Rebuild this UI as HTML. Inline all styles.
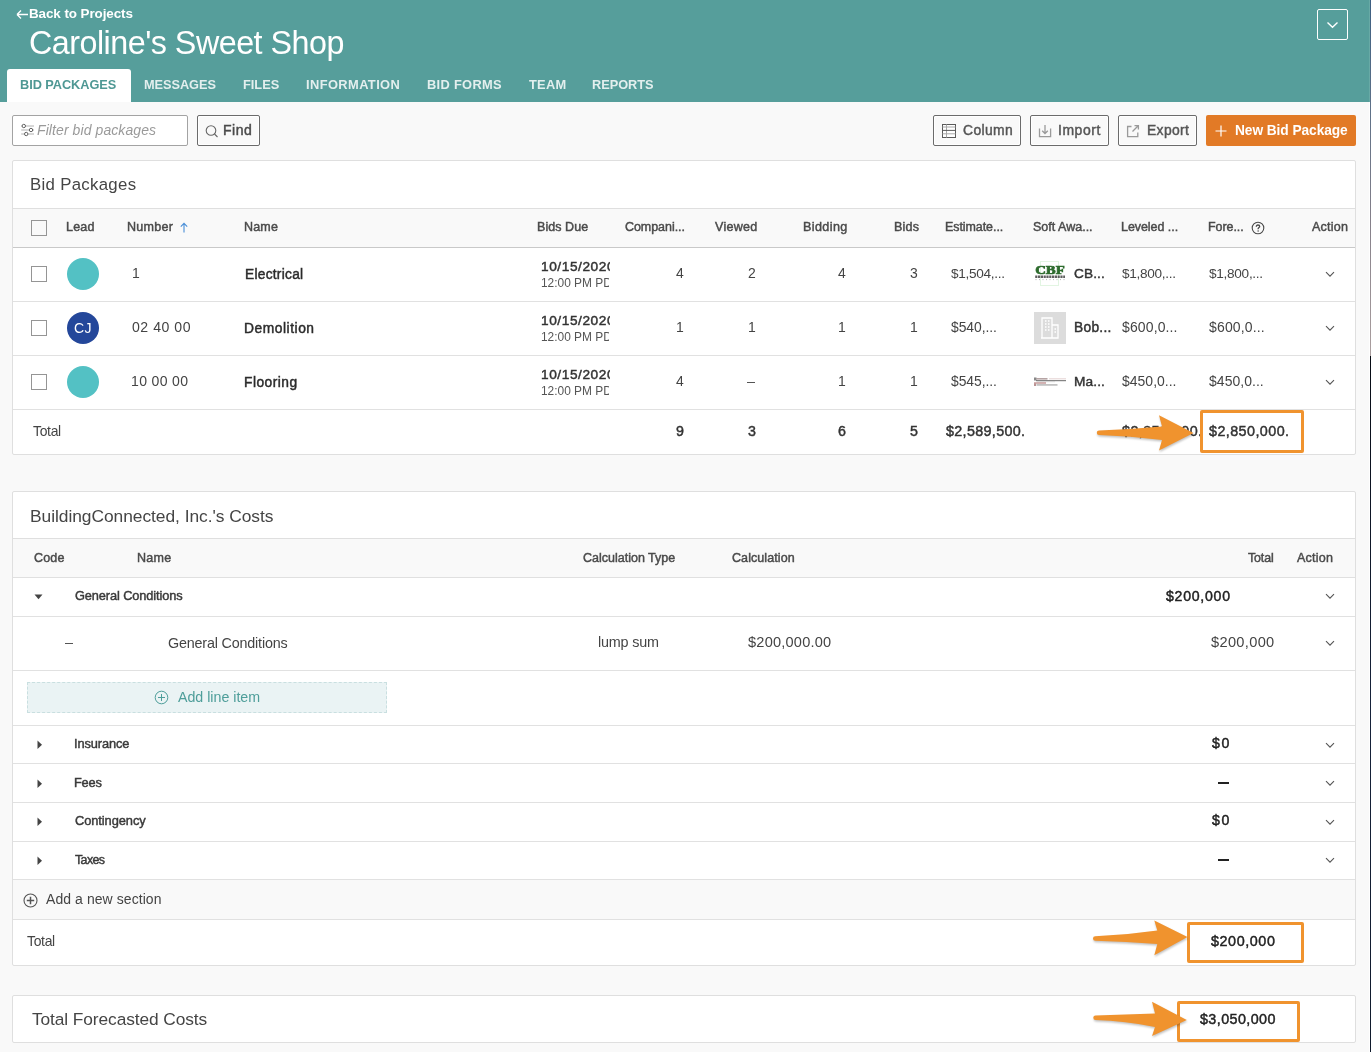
<!DOCTYPE html>
<html><head><meta charset="utf-8"><style>
html,body{margin:0;padding:0;}
body{width:1371px;height:1052px;position:relative;overflow:hidden;background:#f9f9f9;font-family:"Liberation Sans",sans-serif;}
.t{position:absolute;white-space:nowrap;will-change:transform;}
.r{position:absolute;}
</style></head><body>
<div class="r" style="left:0px;top:0px;width:1371px;height:102px;background:#569e9b;"></div>
<div class="r" style="left:7px;top:69px;width:124px;height:33px;background:#fff;border-radius:3px 3px 0 0;"></div>
<svg class="r" style="left:15px;top:7px" width="14" height="14" viewBox="0 0 14 14"><path d="M2 7.5H13M2 7.5L6 3.5M2 7.5L6 11.5" stroke="#fff" stroke-width="1.3" fill="none"/></svg>
<div class="t" style="left:28.60px;top:6.00px;font-size:13.43px;line-height:15px;font-weight:bold;font-style:normal;color:#fff;letter-spacing:-0.085px;">Back to Projects</div>
<div class="t" style="left:28.96px;top:25.00px;font-size:32.29px;line-height:36px;font-weight:normal;font-style:normal;color:#fff;letter-spacing:-0.511px;">Caroline's Sweet Shop</div>
<div class="r" style="left:1317px;top:9px;width:31px;height:31px;border:1.3px solid #fff;border-radius:2px;box-sizing:border-box;"></div>
<svg class="r" style="left:1326px;top:21px" width="13" height="8" viewBox="0 0 13 8"><path d="M1.5 1.5L6.5 6.2L11.5 1.5" stroke="#fff" stroke-width="1.4" fill="none"/></svg>
<div class="t" style="left:20.05px;top:77.00px;font-size:12.75px;line-height:15px;font-weight:bold;font-style:normal;color:#4f9894;letter-spacing:-0.054px;">BID PACKAGES</div>
<div class="t" style="left:144.05px;top:77.00px;font-size:12.76px;line-height:15px;font-weight:bold;font-style:normal;color:#e3efee;letter-spacing:-0.050px;">MESSAGES</div>
<div class="t" style="left:242.64px;top:77.00px;font-size:12.79px;line-height:15px;font-weight:bold;font-style:normal;color:#e3efee;letter-spacing:0.003px;">FILES</div>
<div class="t" style="left:305.64px;top:77.00px;font-size:12.87px;line-height:15px;font-weight:bold;font-style:normal;color:#e3efee;letter-spacing:0.404px;">INFORMATION</div>
<div class="t" style="left:426.84px;top:77.00px;font-size:12.85px;line-height:15px;font-weight:bold;font-style:normal;color:#e3efee;letter-spacing:0.318px;">BID FORMS</div>
<div class="t" style="left:528.96px;top:77.00px;font-size:12.83px;line-height:15px;font-weight:bold;font-style:normal;color:#e3efee;letter-spacing:0.253px;">TEAM</div>
<div class="t" style="left:592.45px;top:77.00px;font-size:12.77px;line-height:15px;font-weight:bold;font-style:normal;color:#e3efee;letter-spacing:-0.030px;">REPORTS</div>
<div class="r" style="left:0px;top:102px;width:1371px;height:950px;background:#f9f9f9;"></div>
<div class="r" style="left:12px;top:115px;width:176px;height:31px;background:#fff;border:1px solid #a3a3a3;box-sizing:border-box;border-radius:2px;"></div>
<svg class="r" style="left:20px;top:122px" width="16" height="16" viewBox="0 0 16 16" fill="none"><path d="M1.2 4H14M1.2 8H14M1.2 12H14" stroke="#b0b0b0" stroke-width="1"/><circle cx="3.8" cy="4" r="1.7" fill="#fff" stroke="#555" stroke-width="0.9"/><circle cx="11" cy="8" r="1.7" fill="#fff" stroke="#555" stroke-width="0.9"/><circle cx="6.2" cy="12" r="1.7" fill="#fff" stroke="#555" stroke-width="0.9"/></svg>
<div class="t" style="left:37.37px;top:122.00px;font-size:13.98px;line-height:16px;font-weight:normal;font-style:italic;color:#9a9a9a;letter-spacing:0.098px;">Filter bid packages</div>
<div class="r" style="left:197px;top:115px;width:63px;height:31px;background:#f9f9f9;border:1px solid #6b6b6b;box-shadow:inset 0 0 0 1px #fff;box-sizing:border-box;border-radius:2px;"></div>
<svg class="r" style="left:205px;top:124px" width="14" height="14" viewBox="0 0 14 14" fill="none" stroke="#666" stroke-width="1.1"><circle cx="6" cy="6.5" r="4.8"/><path d="M9.5 10L12.5 13"/></svg>
<div class="t" style="left:222.85px;top:122.00px;font-size:14.06px;line-height:16px;font-weight:normal;font-style:normal;color:#4a4a4a;letter-spacing:0.501px;-webkit-text-stroke:0.45px #4a4a4a;">Find</div>
<div class="r" style="left:933px;top:115px;width:88px;height:31px;background:#f9f9f9;border:1px solid #6b6b6b;box-shadow:inset 0 0 0 1px #fff;box-sizing:border-box;border-radius:2px;"></div>
<div class="t" style="left:962.99px;top:122.00px;font-size:13.88px;line-height:16px;font-weight:normal;font-style:normal;color:#555;letter-spacing:0.374px;-webkit-text-stroke:0.45px #555;">Column</div>
<div class="r" style="left:1030px;top:115px;width:79px;height:31px;background:#f9f9f9;border:1px solid #6b6b6b;box-shadow:inset 0 0 0 1px #fff;box-sizing:border-box;border-radius:2px;"></div>
<div class="t" style="left:1057.91px;top:122.00px;font-size:13.94px;line-height:16px;font-weight:normal;font-style:normal;color:#555;letter-spacing:0.556px;-webkit-text-stroke:0.45px #555;">Import</div>
<div class="r" style="left:1118px;top:115px;width:79px;height:31px;background:#f9f9f9;border:1px solid #6b6b6b;box-shadow:inset 0 0 0 1px #fff;box-sizing:border-box;border-radius:2px;"></div>
<div class="t" style="left:1146.56px;top:122.00px;font-size:13.89px;line-height:16px;font-weight:normal;font-style:normal;color:#555;letter-spacing:0.358px;-webkit-text-stroke:0.45px #555;">Export</div>
<svg class="r" style="left:942px;top:124px" width="14" height="14" viewBox="0 0 14 14" fill="#fff"><rect x="0.5" y="0.5" width="13" height="13" stroke="#5a5a5a" stroke-width="1"/><path d="M4.5 0.5V13.5M0.5 3H13.5M0.5 9.8H13.5" stroke="#a8a8a8" stroke-width="1" fill="none"/><path d="M0.5 6.4H13.5" stroke="#5a5a5a" stroke-width="1" fill="none"/></svg>
<svg class="r" style="left:1038px;top:124px" width="14" height="14" viewBox="0 0 14 14" fill="none" stroke="#9a9a9a" stroke-width="1.3"><path d="M1.5 4.5V12.6H12.6V4.5"/><path d="M7 1V9.5M4.2 6.7L7 9.5L9.8 6.7"/></svg>
<svg class="r" style="left:1126px;top:124px" width="14" height="14" viewBox="0 0 14 14" fill="none" stroke="#9a9a9a" stroke-width="1.3"><path d="M5.5 2.5H1.6V12.6H11.8V8.5"/><path d="M6.5 7.5L12.2 1.8M8.5 1.6H12.4V5.5"/></svg>
<div class="r" style="left:1206px;top:115px;width:150px;height:31px;background:#e27a26;border-radius:2px;"></div>
<svg class="r" style="left:1215px;top:125px" width="12" height="12" viewBox="0 0 12 12" stroke="#fff" stroke-width="1.2"><path d="M6 0.5V11.5M0.5 6H11.5"/></svg>
<div class="t" style="left:1234.68px;top:123.00px;font-size:13.74px;line-height:15px;font-weight:bold;font-style:normal;color:#fff;letter-spacing:-0.072px;">New Bid Package</div>
<div class="r" style="left:12px;top:160px;width:1344px;height:295px;background:#fff;border:1px solid #dfdfdf;box-sizing:border-box;border-radius:2px;"></div>
<div class="t" style="left:30.32px;top:175.00px;font-size:16.79px;line-height:19px;font-weight:normal;font-style:normal;color:#454545;letter-spacing:0.310px;">Bid Packages</div>
<div class="r" style="left:13px;top:208px;width:1342px;height:1px;background:#dfdfdf;"></div>
<div class="r" style="left:13px;top:209px;width:1342px;height:38px;background:#f9f9f9;"></div>
<div class="r" style="left:13px;top:247px;width:1342px;height:1px;background:#c9c9c9;"></div>
<div class="r" style="left:13px;top:301px;width:1342px;height:1px;background:#e1e1e1;"></div>
<div class="r" style="left:13px;top:355px;width:1342px;height:1px;background:#e1e1e1;"></div>
<div class="r" style="left:13px;top:409px;width:1342px;height:1px;background:#e1e1e1;"></div>
<div class="r" style="left:31px;top:220px;width:16px;height:16px;border:1px solid #959595;box-sizing:border-box;"></div>
<div class="t" style="left:66.37px;top:220.00px;font-size:12.54px;line-height:14px;font-weight:normal;font-style:normal;color:#4a4a4a;letter-spacing:0.183px;-webkit-text-stroke:0.45px #4a4a4a;">Lead</div>
<div class="t" style="left:126.97px;top:220.00px;font-size:12.55px;line-height:14px;font-weight:normal;font-style:normal;color:#4a4a4a;letter-spacing:0.242px;-webkit-text-stroke:0.45px #4a4a4a;">Number</div>
<div class="t" style="left:243.97px;top:220.00px;font-size:12.53px;line-height:14px;font-weight:normal;font-style:normal;color:#4a4a4a;letter-spacing:0.187px;-webkit-text-stroke:0.45px #4a4a4a;">Name</div>
<div class="t" style="left:536.77px;top:220.00px;font-size:12.51px;line-height:14px;font-weight:normal;font-style:normal;color:#4a4a4a;letter-spacing:0.058px;-webkit-text-stroke:0.45px #4a4a4a;">Bids Due</div>
<div class="t" style="left:624.57px;top:220.00px;font-size:12.47px;line-height:14px;font-weight:normal;font-style:normal;color:#4a4a4a;letter-spacing:-0.034px;-webkit-text-stroke:0.45px #4a4a4a;">Compani...</div>
<div class="t" style="left:715.44px;top:220.00px;font-size:12.55px;line-height:14px;font-weight:normal;font-style:normal;color:#4a4a4a;letter-spacing:0.240px;-webkit-text-stroke:0.45px #4a4a4a;">Viewed</div>
<div class="t" style="left:803.47px;top:220.00px;font-size:12.60px;line-height:14px;font-weight:normal;font-style:normal;color:#4a4a4a;letter-spacing:0.387px;-webkit-text-stroke:0.45px #4a4a4a;">Bidding</div>
<div class="t" style="left:894.37px;top:220.00px;font-size:12.54px;line-height:14px;font-weight:normal;font-style:normal;color:#4a4a4a;letter-spacing:0.194px;-webkit-text-stroke:0.45px #4a4a4a;">Bids</div>
<div class="t" style="left:945.48px;top:220.00px;font-size:12.44px;line-height:14px;font-weight:normal;font-style:normal;color:#4a4a4a;letter-spacing:-0.051px;-webkit-text-stroke:0.45px #4a4a4a;">Estimate...</div>
<div class="t" style="left:1033.03px;top:220.00px;font-size:12.50px;line-height:14px;font-weight:normal;font-style:normal;color:#4a4a4a;letter-spacing:0.006px;-webkit-text-stroke:0.45px #4a4a4a;">Soft Awa...</div>
<div class="t" style="left:1120.68px;top:220.00px;font-size:12.46px;line-height:14px;font-weight:normal;font-style:normal;color:#4a4a4a;letter-spacing:-0.033px;-webkit-text-stroke:0.45px #4a4a4a;">Leveled ...</div>
<div class="t" style="left:1207.98px;top:220.00px;font-size:12.44px;line-height:14px;font-weight:normal;font-style:normal;color:#4a4a4a;letter-spacing:-0.049px;-webkit-text-stroke:0.45px #4a4a4a;">Fore...</div>
<div class="t" style="left:1312.18px;top:220.00px;font-size:12.56px;line-height:14px;font-weight:normal;font-style:normal;color:#4a4a4a;letter-spacing:0.228px;-webkit-text-stroke:0.45px #4a4a4a;">Action</div>
<svg class="r" style="left:179px;top:222px" width="10" height="11" viewBox="0 0 10 11" fill="none" stroke="#4a8fd8" stroke-width="1.1"><path d="M5 10.5V1.5M1.8 4.6L5 1.3L8.2 4.6"/></svg>
<svg class="r" style="left:1251px;top:221px" width="14" height="14" viewBox="0 0 14 14" fill="none" stroke="#4a4a4a" stroke-width="1.1"><circle cx="7" cy="7" r="5.8"/><path d="M5.3 5.7C5.3 4.6 6 4 7 4C8 4 8.7 4.6 8.7 5.5C8.7 6.5 7.1 6.7 7.1 7.9V8.2" stroke-width="1.3"/><circle cx="7.1" cy="9.9" r="0.75" fill="#4a4a4a" stroke="none"/></svg>
<div class="r" style="left:31px;top:266px;width:16px;height:16px;border:1px solid #959595;box-sizing:border-box;"></div>
<div class="r" style="left:67px;top:258px;width:32px;height:32px;background:#53c1c4;border-radius:50%;"></div>
<div class="t" style="left:131.74px;top:265.00px;font-size:13.95px;line-height:16px;font-weight:normal;font-style:normal;color:#444;letter-spacing:0.000px;">1</div>
<div class="t" style="left:244.57px;top:267.00px;font-size:13.74px;line-height:15px;font-weight:normal;font-style:normal;color:#2b2b2b;letter-spacing:0.266px;-webkit-text-stroke:0.45px #2b2b2b;">Electrical</div>
<div class="t" style="left:540.96px;top:259.00px;font-size:13.66px;line-height:15px;font-weight:normal;font-style:normal;color:#333;letter-spacing:0.580px;width:68.54px;overflow:hidden;-webkit-text-stroke:0.45px #333;">10/15/2020</div>
<div class="t" style="left:541.09px;top:276.00px;font-size:11.92px;line-height:14px;font-weight:normal;font-style:normal;color:#555;letter-spacing:0.000px;width:68.41px;overflow:hidden;">12:00 PM PDT</div>
<div class="t" style="left:675.85px;top:265.00px;font-size:13.95px;line-height:16px;font-weight:normal;font-style:normal;color:#444;letter-spacing:0.000px;">4</div>
<div class="t" style="left:747.54px;top:265.00px;font-size:13.95px;line-height:16px;font-weight:normal;font-style:normal;color:#444;letter-spacing:0.000px;">2</div>
<div class="t" style="left:837.65px;top:265.00px;font-size:13.95px;line-height:16px;font-weight:normal;font-style:normal;color:#444;letter-spacing:0.000px;">4</div>
<div class="t" style="left:909.65px;top:265.00px;font-size:13.95px;line-height:16px;font-weight:normal;font-style:normal;color:#444;letter-spacing:0.000px;">3</div>
<div class="t" style="left:950.85px;top:266.00px;font-size:13.59px;line-height:15px;font-weight:normal;font-style:normal;color:#444;letter-spacing:-0.297px;">$1,504,...</div>
<div class="t" style="left:1074.31px;top:266.00px;font-size:13.68px;line-height:15px;font-weight:normal;font-style:normal;color:#333;letter-spacing:0.082px;-webkit-text-stroke:0.45px #333;">CB...</div>
<div class="t" style="left:1121.55px;top:266.00px;font-size:13.59px;line-height:15px;font-weight:normal;font-style:normal;color:#444;letter-spacing:-0.297px;">$1,800,...</div>
<div class="t" style="left:1208.85px;top:266.00px;font-size:13.60px;line-height:15px;font-weight:normal;font-style:normal;color:#444;letter-spacing:-0.283px;">$1,800,...</div>
<svg class="r" style="left:1324.5px;top:271.0px" width="10" height="7" viewBox="0 0 10 7" fill="none" stroke="#555" stroke-width="1.1"><path d="M1 1.2L5 5.2L9 1.2"/></svg>
<div class="r" style="left:31px;top:320px;width:16px;height:16px;border:1px solid #959595;box-sizing:border-box;"></div>
<div class="r" style="left:67px;top:312px;width:32px;height:32px;background:#24479a;border-radius:50%;"></div>
<div class="t" style="left:74.49px;top:320.00px;font-size:14.01px;line-height:16px;font-weight:normal;font-style:normal;color:#fff;letter-spacing:0.432px;">CJ</div>
<div class="t" style="left:132.45px;top:319.00px;font-size:14.08px;line-height:16px;font-weight:normal;font-style:normal;color:#444;letter-spacing:0.527px;">02 40 00</div>
<div class="t" style="left:244.37px;top:321.00px;font-size:13.80px;line-height:15px;font-weight:normal;font-style:normal;color:#2b2b2b;letter-spacing:0.537px;-webkit-text-stroke:0.45px #2b2b2b;">Demolition</div>
<div class="t" style="left:540.96px;top:313.00px;font-size:13.66px;line-height:15px;font-weight:normal;font-style:normal;color:#333;letter-spacing:0.580px;width:68.54px;overflow:hidden;-webkit-text-stroke:0.45px #333;">10/15/2020</div>
<div class="t" style="left:541.09px;top:330.00px;font-size:11.92px;line-height:14px;font-weight:normal;font-style:normal;color:#555;letter-spacing:0.000px;width:68.41px;overflow:hidden;">12:00 PM PDT</div>
<div class="t" style="left:676.12px;top:319.00px;font-size:13.95px;line-height:16px;font-weight:normal;font-style:normal;color:#444;letter-spacing:0.000px;">1</div>
<div class="t" style="left:747.52px;top:319.00px;font-size:13.95px;line-height:16px;font-weight:normal;font-style:normal;color:#444;letter-spacing:0.000px;">1</div>
<div class="t" style="left:837.92px;top:319.00px;font-size:13.95px;line-height:16px;font-weight:normal;font-style:normal;color:#444;letter-spacing:0.000px;">1</div>
<div class="t" style="left:909.72px;top:319.00px;font-size:13.95px;line-height:16px;font-weight:normal;font-style:normal;color:#444;letter-spacing:0.000px;">1</div>
<div class="t" style="left:950.85px;top:319.00px;font-size:13.89px;line-height:16px;font-weight:normal;font-style:normal;color:#444;letter-spacing:-0.058px;">$540,...</div>
<div class="t" style="left:1074.37px;top:320.00px;font-size:13.74px;line-height:15px;font-weight:normal;font-style:normal;color:#333;letter-spacing:0.295px;-webkit-text-stroke:0.45px #333;">Bob...</div>
<div class="t" style="left:1121.55px;top:319.00px;font-size:13.99px;line-height:16px;font-weight:normal;font-style:normal;color:#444;letter-spacing:0.134px;">$600,0...</div>
<div class="t" style="left:1208.85px;top:319.00px;font-size:14.00px;line-height:16px;font-weight:normal;font-style:normal;color:#444;letter-spacing:0.156px;">$600,0...</div>
<svg class="r" style="left:1324.5px;top:325.0px" width="10" height="7" viewBox="0 0 10 7" fill="none" stroke="#555" stroke-width="1.1"><path d="M1 1.2L5 5.2L9 1.2"/></svg>
<div class="r" style="left:31px;top:374px;width:16px;height:16px;border:1px solid #959595;box-sizing:border-box;"></div>
<div class="r" style="left:67px;top:366px;width:32px;height:32px;background:#53c1c4;border-radius:50%;"></div>
<div class="t" style="left:130.93px;top:373.00px;font-size:14.04px;line-height:16px;font-weight:normal;font-style:normal;color:#444;letter-spacing:0.339px;">10 00 00</div>
<div class="t" style="left:244.37px;top:375.00px;font-size:13.79px;line-height:15px;font-weight:normal;font-style:normal;color:#2b2b2b;letter-spacing:0.472px;-webkit-text-stroke:0.45px #2b2b2b;">Flooring</div>
<div class="t" style="left:540.96px;top:367.00px;font-size:13.66px;line-height:15px;font-weight:normal;font-style:normal;color:#333;letter-spacing:0.580px;width:68.54px;overflow:hidden;-webkit-text-stroke:0.45px #333;">10/15/2020</div>
<div class="t" style="left:541.09px;top:384.00px;font-size:11.92px;line-height:14px;font-weight:normal;font-style:normal;color:#555;letter-spacing:0.000px;width:68.41px;overflow:hidden;">12:00 PM PDT</div>
<div class="t" style="left:675.85px;top:373.00px;font-size:13.95px;line-height:16px;font-weight:normal;font-style:normal;color:#444;letter-spacing:0.000px;">4</div>
<div class="r" style="left:747px;top:382px;width:8px;height:1px;background:#555;"></div>
<div class="t" style="left:837.92px;top:373.00px;font-size:13.95px;line-height:16px;font-weight:normal;font-style:normal;color:#444;letter-spacing:0.000px;">1</div>
<div class="t" style="left:909.72px;top:373.00px;font-size:13.95px;line-height:16px;font-weight:normal;font-style:normal;color:#444;letter-spacing:0.000px;">1</div>
<div class="t" style="left:950.85px;top:373.00px;font-size:13.89px;line-height:16px;font-weight:normal;font-style:normal;color:#444;letter-spacing:-0.058px;">$545,...</div>
<div class="t" style="left:1074.38px;top:374.00px;font-size:13.69px;line-height:15px;font-weight:normal;font-style:normal;color:#333;letter-spacing:0.110px;-webkit-text-stroke:0.45px #333;">Ma...</div>
<div class="t" style="left:1121.55px;top:373.00px;font-size:13.96px;line-height:16px;font-weight:normal;font-style:normal;color:#444;letter-spacing:0.024px;">$450,0...</div>
<div class="t" style="left:1208.85px;top:373.00px;font-size:13.97px;line-height:16px;font-weight:normal;font-style:normal;color:#444;letter-spacing:0.046px;">$450,0...</div>
<svg class="r" style="left:1324.5px;top:379.0px" width="10" height="7" viewBox="0 0 10 7" fill="none" stroke="#555" stroke-width="1.1"><path d="M1 1.2L5 5.2L9 1.2"/></svg>
<div class="r" style="left:1040px;top:261px;width:19px;height:25px;border:1px solid #e2f5e2;box-sizing:border-box;"></div>
<svg class="r" style="left:1034px;top:262px;will-change:transform" width="32" height="20" viewBox="0 0 32 20"><text x="1.2" y="12" textLength="29.5" lengthAdjust="spacingAndGlyphs" font-family="Liberation Serif" font-weight="bold" font-size="11.8" fill="#2d6b2d" stroke="#2d6b2d" stroke-width="0.7">CBF</text><path d="M1.2 14.8H31" stroke="#444" stroke-width="2.4" stroke-dasharray="2.2 0.6" opacity="0.85"/><path d="M1.5 17.6H31" stroke="#888" stroke-width="1" stroke-dasharray="1 2.5" opacity="0.6"/></svg>
<div class="r" style="left:1034px;top:312px;width:32px;height:32px;background:#dcdcdc;"></div>
<svg class="r" style="left:1034px;top:312px" width="32" height="32" viewBox="0 0 32 32" fill="none" stroke="#fff" stroke-width="1.3"><path d="M8 26V6H18V26M18 13H24V26H7"/><path d="M11 9h1.5M14 9h1.5M11 12h1.5M14 12h1.5M11 15h1.5M14 15h1.5M11 18h1.5M14 18h1.5M20.5 17h1.5M20.5 20h1.5" stroke-width="1.5"/></svg>
<svg class="r" style="left:1034px;top:376px" width="32" height="12" viewBox="0 0 32 12"><rect x="0" y="1.5" width="2.5" height="3" fill="#555" opacity="0.7"/><rect x="2.5" y="2" width="11" height="1.6" fill="#7a5a5a" opacity="0.55"/><rect x="15" y="2.3" width="17" height="1" fill="#c09a9a" opacity="0.45"/><rect x="2" y="4.1" width="30" height="1.1" fill="#555" opacity="0.8"/><rect x="3" y="5.4" width="18" height="0.8" fill="#bbb" opacity="0.5"/><rect x="0" y="6.4" width="12" height="1.2" fill="#9b5050" opacity="0.7"/><rect x="0" y="7.6" width="2" height="2.4" fill="#8b4a4a" opacity="0.6"/><rect x="2.5" y="8" width="21" height="1.8" fill="#777" opacity="0.45"/></svg>
<div class="t" style="left:32.99px;top:423.00px;font-size:13.93px;line-height:16px;font-weight:normal;font-style:normal;color:#444;letter-spacing:-0.304px;">Total</div>
<div class="t" style="left:675.75px;top:423.00px;font-size:14.24px;line-height:16px;font-weight:normal;font-style:normal;color:#333;letter-spacing:0.000px;-webkit-text-stroke:0.45px #333;">9</div>
<div class="t" style="left:748.30px;top:423.00px;font-size:14.24px;line-height:16px;font-weight:normal;font-style:normal;color:#333;letter-spacing:0.000px;-webkit-text-stroke:0.45px #333;">3</div>
<div class="t" style="left:837.60px;top:423.00px;font-size:14.24px;line-height:16px;font-weight:normal;font-style:normal;color:#333;letter-spacing:0.000px;-webkit-text-stroke:0.45px #333;">6</div>
<div class="t" style="left:909.88px;top:423.00px;font-size:14.24px;line-height:16px;font-weight:normal;font-style:normal;color:#333;letter-spacing:0.000px;-webkit-text-stroke:0.45px #333;">5</div>
<div class="t" style="left:946.15px;top:423.00px;font-size:14.33px;line-height:16px;font-weight:normal;font-style:normal;color:#333;letter-spacing:0.336px;-webkit-text-stroke:0.45px #333;">$2,589,500.</div>
<div class="t" style="left:1121.55px;top:423.00px;font-size:14.35px;line-height:16px;font-weight:normal;font-style:normal;color:#333;letter-spacing:0.424px;width:78.95px;overflow:hidden;-webkit-text-stroke:0.45px #333;">$2,850,000.</div>
<div class="t" style="left:1208.55px;top:423.00px;font-size:14.35px;line-height:16px;font-weight:normal;font-style:normal;color:#333;letter-spacing:0.424px;-webkit-text-stroke:0.45px #333;">$2,850,000.</div>
<div class="r" style="left:12px;top:491px;width:1344px;height:475px;background:#fff;border:1px solid #dfdfdf;box-sizing:border-box;border-radius:2px;"></div>
<div class="t" style="left:30.07px;top:506.00px;font-size:17.39px;line-height:20px;font-weight:normal;font-style:normal;color:#454545;letter-spacing:-0.047px;">BuildingConnected, Inc.'s Costs</div>
<div class="r" style="left:13px;top:538px;width:1342px;height:1px;background:#dfdfdf;"></div>
<div class="r" style="left:13px;top:539px;width:1342px;height:38px;background:#f9f9f9;"></div>
<div class="r" style="left:13px;top:577px;width:1342px;height:1px;background:#e0e0e0;"></div>
<div class="r" style="left:13px;top:616px;width:1342px;height:1px;background:#e1e1e1;"></div>
<div class="r" style="left:13px;top:670px;width:1342px;height:1px;background:#e1e1e1;"></div>
<div class="r" style="left:13px;top:725px;width:1342px;height:1px;background:#e1e1e1;"></div>
<div class="r" style="left:13px;top:763px;width:1342px;height:1px;background:#e1e1e1;"></div>
<div class="r" style="left:13px;top:802px;width:1342px;height:1px;background:#e1e1e1;"></div>
<div class="r" style="left:13px;top:841px;width:1342px;height:1px;background:#e1e1e1;"></div>
<div class="r" style="left:13px;top:879px;width:1342px;height:1px;background:#e1e1e1;"></div>
<div class="r" style="left:13px;top:919px;width:1342px;height:1px;background:#e1e1e1;"></div>
<div class="r" style="left:13px;top:880px;width:1342px;height:39px;background:#f9f9f9;"></div>
<div class="t" style="left:34.36px;top:551.00px;font-size:12.53px;line-height:14px;font-weight:normal;font-style:normal;color:#4a4a4a;letter-spacing:0.149px;-webkit-text-stroke:0.45px #4a4a4a;">Code</div>
<div class="t" style="left:137.37px;top:551.00px;font-size:12.54px;line-height:14px;font-weight:normal;font-style:normal;color:#4a4a4a;letter-spacing:0.275px;-webkit-text-stroke:0.45px #4a4a4a;">Name</div>
<div class="t" style="left:583.47px;top:551.00px;font-size:12.50px;line-height:14px;font-weight:normal;font-style:normal;color:#4a4a4a;letter-spacing:-0.001px;-webkit-text-stroke:0.45px #4a4a4a;">Calculation Type</div>
<div class="t" style="left:732.26px;top:551.00px;font-size:12.52px;line-height:14px;font-weight:normal;font-style:normal;color:#4a4a4a;letter-spacing:0.071px;-webkit-text-stroke:0.45px #4a4a4a;">Calculation</div>
<div class="t" style="left:1248.02px;top:551.00px;font-size:12.39px;line-height:14px;font-weight:normal;font-style:normal;color:#4a4a4a;letter-spacing:-0.109px;-webkit-text-stroke:0.45px #4a4a4a;">Total</div>
<div class="t" style="left:1297.38px;top:551.00px;font-size:12.55px;line-height:14px;font-weight:normal;font-style:normal;color:#4a4a4a;letter-spacing:0.211px;-webkit-text-stroke:0.45px #4a4a4a;">Action</div>
<svg class="r" style="left:34px;top:594px" width="9" height="6" viewBox="0 0 9 6"><path d="M0.5 0.5H8.5L4.5 5.2Z" fill="#444"/></svg>
<div class="t" style="left:74.76px;top:588.00px;font-size:12.81px;line-height:15px;font-weight:normal;font-style:normal;color:#3a3a3a;letter-spacing:-0.115px;-webkit-text-stroke:0.45px #3a3a3a;">General Conditions</div>
<div class="t" style="left:1165.55px;top:588.00px;font-size:14.12px;line-height:16px;font-weight:normal;font-style:normal;color:#222;letter-spacing:0.733px;-webkit-text-stroke:0.45px #222;">$200,000</div>
<svg class="r" style="left:1325px;top:593.2px" width="10" height="7" viewBox="0 0 10 7" fill="none" stroke="#555" stroke-width="1.1"><path d="M1 1.2L5 5.2L9 1.2"/></svg>
<div class="r" style="left:65px;top:643px;width:8px;height:1px;background:#555;"></div>
<div class="t" style="left:167.78px;top:635.00px;font-size:14.34px;line-height:16px;font-weight:normal;font-style:normal;color:#444;letter-spacing:-0.177px;">General Conditions</div>
<div class="t" style="left:598.43px;top:634.00px;font-size:14.37px;line-height:16px;font-weight:normal;font-style:normal;color:#444;letter-spacing:-0.181px;">lump sum</div>
<div class="t" style="left:747.54px;top:634.00px;font-size:14.59px;line-height:16px;font-weight:normal;font-style:normal;color:#444;letter-spacing:0.211px;">$200,000.00</div>
<div class="t" style="left:1211.34px;top:634.00px;font-size:14.61px;line-height:16px;font-weight:normal;font-style:normal;color:#444;letter-spacing:0.328px;">$200,000</div>
<svg class="r" style="left:1325px;top:640.0px" width="10" height="7" viewBox="0 0 10 7" fill="none" stroke="#555" stroke-width="1.1"><path d="M1 1.2L5 5.2L9 1.2"/></svg>
<div class="r" style="left:27px;top:682px;width:360px;height:31px;background:#eaf3f4;border:1px dashed #c9dfe0;box-sizing:border-box;"></div>
<svg class="r" style="left:154px;top:690px" width="15" height="15" viewBox="0 0 15 15" fill="none" stroke="#4e9e9a" stroke-width="1"><circle cx="7.5" cy="7.5" r="6.3"/><path d="M7.5 4V11M4 7.5H11"/></svg>
<div class="t" style="left:177.87px;top:689.00px;font-size:14.23px;line-height:16px;font-weight:normal;font-style:normal;color:#4e9e9a;letter-spacing:-0.010px;">Add line item</div>
<svg class="r" style="left:37px;top:740px" width="6" height="10" viewBox="0 0 6 10"><path d="M0.5 0.5V9L5 4.75Z" fill="#444"/></svg>
<div class="t" style="left:74.32px;top:736.00px;font-size:12.82px;line-height:15px;font-weight:normal;font-style:normal;color:#3a3a3a;letter-spacing:-0.109px;-webkit-text-stroke:0.45px #3a3a3a;">Insurance</div>
<div class="t" style="left:1212.25px;top:735.00px;font-size:14.15px;line-height:16px;font-weight:normal;font-style:normal;color:#222;letter-spacing:1.661px;-webkit-text-stroke:0.45px #222;">$0</div>
<svg class="r" style="left:1325px;top:741.5px" width="10" height="7" viewBox="0 0 10 7" fill="none" stroke="#555" stroke-width="1.1"><path d="M1 1.2L5 5.2L9 1.2"/></svg>
<svg class="r" style="left:37px;top:779px" width="6" height="10" viewBox="0 0 6 10"><path d="M0.5 0.5V9L5 4.75Z" fill="#444"/></svg>
<div class="t" style="left:74.45px;top:775.00px;font-size:12.78px;line-height:15px;font-weight:normal;font-style:normal;color:#3a3a3a;letter-spacing:-0.200px;-webkit-text-stroke:0.45px #3a3a3a;">Fees</div>
<div class="r" style="left:1218px;top:782px;width:11px;height:2px;background:#222;"></div>
<svg class="r" style="left:1325px;top:780.1px" width="10" height="7" viewBox="0 0 10 7" fill="none" stroke="#555" stroke-width="1.1"><path d="M1 1.2L5 5.2L9 1.2"/></svg>
<svg class="r" style="left:37px;top:817px" width="6" height="10" viewBox="0 0 6 10"><path d="M0.5 0.5V9L5 4.75Z" fill="#444"/></svg>
<div class="t" style="left:74.85px;top:813.00px;font-size:12.86px;line-height:15px;font-weight:normal;font-style:normal;color:#3a3a3a;letter-spacing:-0.080px;-webkit-text-stroke:0.45px #3a3a3a;">Contingency</div>
<div class="t" style="left:1212.25px;top:812.00px;font-size:14.15px;line-height:16px;font-weight:normal;font-style:normal;color:#222;letter-spacing:1.661px;-webkit-text-stroke:0.45px #222;">$0</div>
<svg class="r" style="left:1325px;top:818.8px" width="10" height="7" viewBox="0 0 10 7" fill="none" stroke="#555" stroke-width="1.1"><path d="M1 1.2L5 5.2L9 1.2"/></svg>
<svg class="r" style="left:37px;top:856px" width="6" height="10" viewBox="0 0 6 10"><path d="M0.5 0.5V9L5 4.75Z" fill="#444"/></svg>
<div class="t" style="left:75.22px;top:853.00px;font-size:12.42px;line-height:14px;font-weight:normal;font-style:normal;color:#3a3a3a;letter-spacing:-0.600px;-webkit-text-stroke:0.45px #3a3a3a;">Taxes</div>
<div class="r" style="left:1218px;top:859px;width:11px;height:2px;background:#222;"></div>
<svg class="r" style="left:1325px;top:857.1px" width="10" height="7" viewBox="0 0 10 7" fill="none" stroke="#555" stroke-width="1.1"><path d="M1 1.2L5 5.2L9 1.2"/></svg>
<svg class="r" style="left:22.5px;top:892.5px" width="15" height="15" viewBox="0 0 15 15" fill="none" stroke="#555" stroke-width="1.1"><circle cx="7.5" cy="7.5" r="6.5"/><path d="M7.5 3.8V11.2M3.8 7.5H11.2" stroke-width="1.5"/></svg>
<div class="t" style="left:45.77px;top:891.00px;font-size:13.98px;line-height:16px;font-weight:normal;font-style:normal;color:#444;letter-spacing:0.083px;">Add a new section</div>
<div class="t" style="left:26.59px;top:933.00px;font-size:13.93px;line-height:16px;font-weight:normal;font-style:normal;color:#444;letter-spacing:-0.304px;">Total</div>
<div class="t" style="left:1210.65px;top:933.00px;font-size:14.37px;line-height:16px;font-weight:normal;font-style:normal;color:#222;letter-spacing:0.568px;-webkit-text-stroke:0.45px #222;">$200,000</div>
<div class="r" style="left:12px;top:995px;width:1344px;height:48px;background:#fff;border:1px solid #dfdfdf;box-sizing:border-box;border-radius:2px;"></div>
<div class="t" style="left:31.51px;top:1009.00px;font-size:17.33px;line-height:20px;font-weight:normal;font-style:normal;color:#454545;letter-spacing:-0.098px;">Total Forecasted Costs</div>
<div class="t" style="left:1199.95px;top:1011.00px;font-size:14.34px;line-height:16px;font-weight:normal;font-style:normal;color:#222;letter-spacing:0.404px;-webkit-text-stroke:0.45px #222;">$3,050,000</div>
<div class="r" style="left:1200px;top:410px;width:104px;height:43px;border:3px solid #f0932e;box-sizing:border-box;border-radius:2px;"></div>
<div class="r" style="left:1187px;top:922px;width:117px;height:41px;border:3px solid #f0932e;box-sizing:border-box;border-radius:2px;"></div>
<div class="r" style="left:1177px;top:1001px;width:123px;height:41px;border:3px solid #f0932e;box-sizing:border-box;border-radius:2px;"></div>
<svg class="r" style="left:0;top:0" width="1371" height="1052" viewBox="0 0 1371 1052"><defs><filter id="sh" x="-10%" y="-30%" width="120%" height="160%"><feGaussianBlur stdDeviation="1"/></filter></defs><path d="M1099,430.6 Q1130.5,429.3 1162,426.5 L1159,415.3 L1193.5,433 L1159,450.6 L1162,440 Q1130.5,435.8 1099,435.0 A2.2 2.2 0 0 1 1099,430.6 Z" fill="#000" opacity="0.25" transform="translate(0.5,1.5)" filter="url(#sh)"/><path d="M1099,430.6 Q1130.5,429.3 1162,426.5 L1159,415.3 L1193.5,433 L1159,450.6 L1162,440 Q1130.5,435.8 1099,435.0 A2.2 2.2 0 0 1 1099,430.6 Z" fill="#f0932e"/><path d="M1095.2,936.3 Q1126.2,935.0 1157.3,930.5 L1154.3,920.6 L1187.5,937 L1154.3,955.3 L1157.3,944 Q1126.2,941.5 1095.2,940.7 A2.2 2.2 0 0 1 1095.2,936.3 Z" fill="#000" opacity="0.25" transform="translate(0.5,1.5)" filter="url(#sh)"/><path d="M1095.2,936.3 Q1126.2,935.0 1157.3,930.5 L1154.3,920.6 L1187.5,937 L1154.3,955.3 L1157.3,944 Q1126.2,941.5 1095.2,940.7 A2.2 2.2 0 0 1 1095.2,936.3 Z" fill="#f0932e"/><path d="M1095.5,1015.5999999999999 Q1125.2,1014.3 1155,1013.5 L1152,1001.7 L1186.8,1020 L1152,1036.1 L1155,1027 Q1125.2,1020.8 1095.5,1020.0 A2.2 2.2 0 0 1 1095.5,1015.5999999999999 Z" fill="#000" opacity="0.25" transform="translate(0.5,1.5)" filter="url(#sh)"/><path d="M1095.5,1015.5999999999999 Q1125.2,1014.3 1155,1013.5 L1152,1001.7 L1186.8,1020 L1152,1036.1 L1155,1027 Q1125.2,1020.8 1095.5,1020.0 A2.2 2.2 0 0 1 1095.5,1015.5999999999999 Z" fill="#f0932e"/></svg>
<div class="r" style="left:1370px;top:0px;width:1px;height:356px;background:linear-gradient(#3d5f82,#5c7088 29%,#85808a 62%,#ab9f9f);"></div>
<div class="r" style="left:1370px;top:356px;width:1px;height:696px;background:linear-gradient(#070b14,#16223a 50%,#101a2c);"></div>
<div class="r" style="left:1369px;top:0px;width:1px;height:102px;background:#68aaa6;"></div>
<div class="r" style="left:1369px;top:102px;width:1px;height:950px;background:#ffffff;"></div>
</body></html>
